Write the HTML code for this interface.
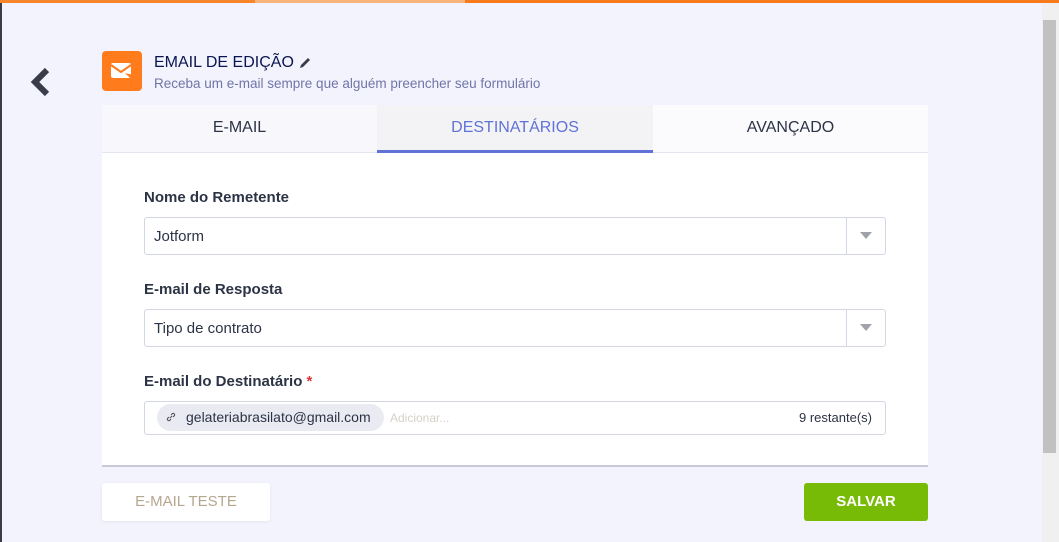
<!DOCTYPE html>
<html><head><style>
*{margin:0;padding:0;box-sizing:border-box}
body{width:1059px;height:542px;background:#f2f3fc;font-family:"Liberation Sans",sans-serif;position:relative;overflow:hidden}
.abs{position:absolute}
.label{font-size:15px;font-weight:bold;color:#2c3345}
.inp{position:absolute;left:144px;width:742px;height:38px;background:#fff;border:1px solid #d3d6e3;border-radius:3px;font-size:15px;color:#2c3345;padding:10px 9px}
.arr{position:absolute;right:0;top:0;width:39px;height:36px;border-left:1px solid #d3d6e3}
.arr:after{content:"";position:absolute;left:13px;top:14px;border-left:6px solid transparent;border-right:6px solid transparent;border-top:7px solid #a0a3ab}
</style></head><body>
<div class="abs" style="left:0;top:0;width:255px;height:3px;background:#f7862a"></div>
<div class="abs" style="left:255px;top:0;width:210px;height:3px;background:#f9b47a"></div>
<div class="abs" style="left:465px;top:0;width:594px;height:3px;background:#f77a1c"></div>
<div class="abs" style="left:0;top:3px;width:2px;height:539px;background:#3a3c46"></div>
<div class="abs" style="left:1042px;top:3px;width:17px;height:539px;background:#f0f0f0"></div>
<div class="abs" style="left:1043px;top:20px;width:13px;height:433px;background:#c1c1c1"></div>
<svg class="abs" style="left:28px;top:66px" width="26" height="32" viewBox="0 0 26 32"><path d="M19 4 L7 16 L19 28" fill="none" stroke="#3a3c4a" stroke-width="6"/></svg>
<div class="abs" style="left:102px;top:51px;width:40px;height:40px;background:#ff7b1c;border-radius:4px"></div>
<svg class="abs" style="left:110px;top:60px" width="24" height="22" viewBox="0 0 24 22"><rect x="1" y="3" width="20" height="15" rx="2" fill="#fff"/><path d="M1 5 L11 12 L21 5" fill="none" stroke="#ff7b1c" stroke-width="2"/><path d="M15 13 l5 5 l3 -3 z" fill="#ff7b1c"/></svg>
<div class="abs" style="left:154px;top:54px;font-size:16px;color:#0a1551">EMAIL DE EDIÇÃO</div>
<svg class="abs" style="left:298px;top:56px" width="14" height="14" viewBox="0 0 14 14"><path d="M2 12 l1-3 l7-7 l2 2 l-7 7 z" fill="#3a3c4a"/></svg>
<div class="abs" style="left:154px;top:76px;font-size:13.5px;color:#6f76a7">Receba um e-mail sempre que alguém preencher seu formulário</div>
<div class="abs" style="left:102px;top:105px;width:826px;height:362px;background:#fff;border-bottom:2px solid #c8cad8"></div>
<div class="abs" style="left:102px;top:105px;width:826px;height:48px;background:#f7f7fc;border-bottom:1px solid #e3e5ee"></div>
<div class="abs" style="left:653px;top:105px;width:275px;height:47px;background:#fbfbfe"></div>
<div class="abs" style="left:377px;top:105px;width:276px;height:48px;background:#f3f3f5;border-bottom:3px solid #6072d6"></div>
<div class="abs" style="left:102px;top:119px;width:275px;text-align:center;font-size:16px;color:#2c3345">E-MAIL</div>
<div class="abs" style="left:377px;top:119px;width:276px;text-align:center;font-size:16px;color:#6072d6">DESTINATÁRIOS</div>
<div class="abs" style="left:653px;top:119px;width:275px;text-align:center;font-size:16px;color:#2c3345">AVANÇADO</div>
<div class="abs label" style="left:144px;top:189px">Nome do Remetente</div>
<div class="inp" style="top:217px">Jotform<div class="arr"></div></div>
<div class="abs label" style="left:144px;top:281px">E-mail de Resposta</div>
<div class="inp" style="top:309px">Tipo de contrato<div class="arr"></div></div>
<div class="abs label" style="left:144px;top:373px">E-mail do Destinatário <span style="color:#d33">*</span></div>
<div class="inp" style="top:401px;height:34px;padding:0"></div>
<div class="abs" style="left:157px;top:404px;width:227px;height:27px;background:#eaebf2;border-radius:14px"></div>
<svg class="abs" style="left:166px;top:412px" width="10" height="10" viewBox="0 0 10 10"><path d="M4 6 L6 4 M3 5 L1.5 6.5 a1.5 1.5 0 0 0 2 2 L5 7 M5 3 L6.5 1.5 a1.5 1.5 0 0 1 2 2 L7 5" fill="none" stroke="#555" stroke-width="1.1"/></svg>
<div class="abs" style="left:186px;top:409px;font-size:14px;color:#2c3345">gelateriabrasilato@gmail.com</div>
<div class="abs" style="left:390px;top:411px;font-size:12px;color:#d6d0c6">Adicionar...</div>
<div class="abs" style="left:799px;top:410px;font-size:13px;color:#2c3345">9 restante(s)</div>
<div class="abs" style="left:102px;top:483px;width:168px;height:38px;background:#fff;border-radius:3px;box-shadow:0 1px 3px rgba(0,0,0,.06);text-align:center;font-size:15px;color:#b5a78e;line-height:38px">E-MAIL TESTE</div>
<div class="abs" style="left:804px;top:483px;width:124px;height:38px;background:#78bb07;border-radius:3px;text-align:center;font-size:15px;color:#fff;font-weight:bold;line-height:38px">SALVAR</div>
</body></html>
